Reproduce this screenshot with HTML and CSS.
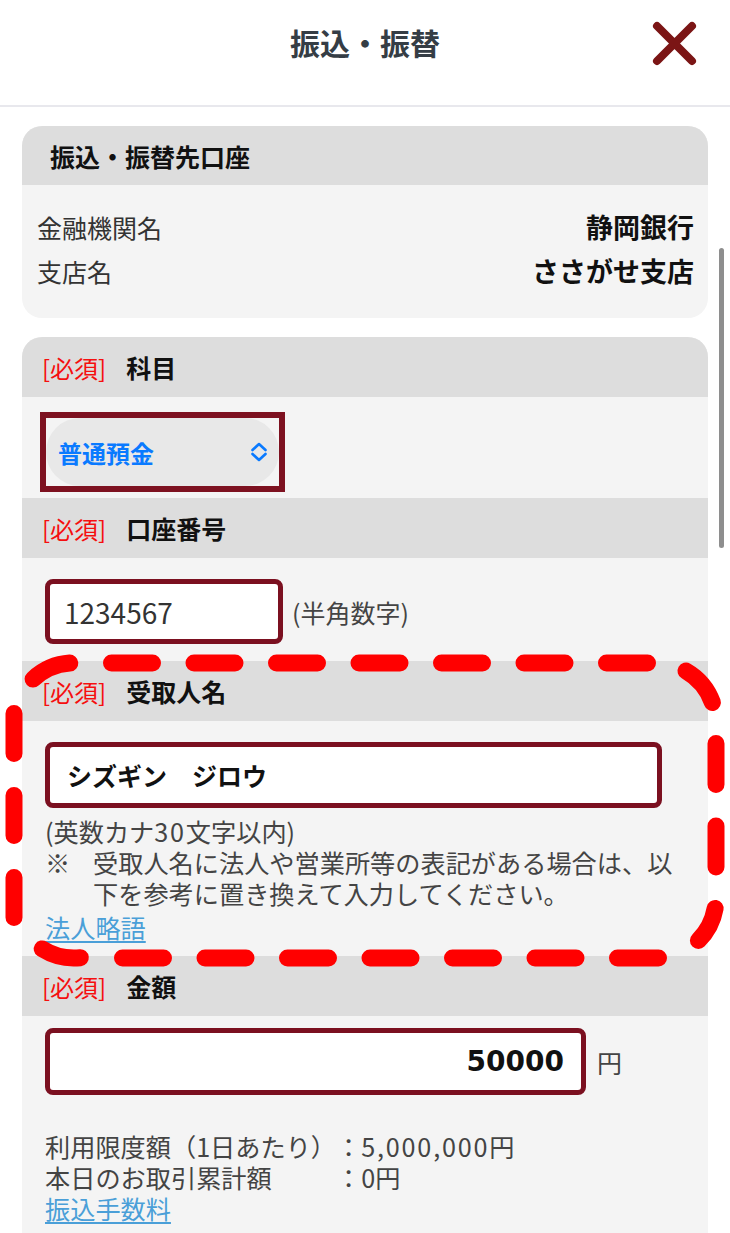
FILE: index.html
```html
<!DOCTYPE html>
<html lang="ja">
<head>
<meta charset="utf-8">
<title>振込・振替</title>
<link rel="stylesheet" href="styles.css">
</head>
<body>
<header class="topbar">
  <h1 class="title">振込・振替</h1>
  <button class="close" aria-label="閉じる">
    <svg width="45" height="45" viewBox="0 0 45 45"><path d="M5 5 L40 40 M40 5 L5 40" stroke="#7b1515" stroke-width="8" stroke-linecap="round" fill="none"/></svg>
  </button>
</header>

<main class="content">
  <section class="card">
    <div class="card-head">振込・振替先口座</div>
    <div class="info">
      <div class="info-row"><span class="info-label">金融機関名</span><span class="info-value">静岡銀行</span></div>
      <div class="info-row"><span class="info-label">支店名</span><span class="info-value">ささがせ支店</span></div>
    </div>
  </section>

  <section class="card form-card">
    <div class="field-head"><span class="req">[必須]</span><span class="field-title">科目</span></div>
    <div class="field-body select-body">
      <div class="select-frame">
        <div class="select-pill">
          <span class="select-text">普通預金</span>
          <svg class="chevron" width="18" height="22" viewBox="0 0 18 22"><path d="M2.5 9 L9 3 L15.5 9 M2.5 13 L9 19 L15.5 13" stroke="#0a7aff" stroke-width="2.6" stroke-linecap="round" stroke-linejoin="round" fill="none"/></svg>
        </div>
      </div>
    </div>

    <div class="field-head"><span class="req">[必須]</span><span class="field-title">口座番号</span></div>
    <div class="field-body inline-body account-body">
      <div class="input input-account">1234567</div>
      <span class="hint">(半角数字)</span>
    </div>

    <div class="field-head"><span class="req">[必須]</span><span class="field-title">受取人名</span></div>
    <div class="field-body name-body">
      <div class="input input-name">シズギン　ジロウ</div>
      <div class="notes name-notes">
        <div>(英数カナ<span class="num">30</span>文字以内)</div>
        <div class="note-row"><span class="note-mark">※</span><span class="note-text">受取人名に法人や営業所等の表記がある場合は、以下を参考に置き換えて入力してください。</span></div>
        <a class="link link-shift" href="#">法人略語</a>
      </div>
    </div>

    <div class="field-head"><span class="req">[必須]</span><span class="field-title">金額</span></div>
    <div class="field-body amount-body">
      <div class="inline-body">
        <div class="input input-amount">50000</div>
        <span class="hint">円</span>
      </div>
      <div class="notes amount-notes">
        <div class="limit-grid">
          <span>利用限度額（1日あたり）</span><span>：<span class="num">5,000,000</span>円</span>
          <span>本日のお取引累計額</span><span>：0円</span>
        </div>
        <a class="link" href="#">振込手数料</a>
      </div>
    </div>
  </section>
</main>

<svg class="annotation" width="730" height="1233" viewBox="0 0 730 1233">
  <g fill="none" stroke="#ff0000" stroke-width="17" stroke-linecap="round">
    <path d="M111.5 663 H660" stroke-dasharray="41 41.5"/>
    <path d="M33.1 679.1 A60 60 0 0 1 69.8 663.1"/>
    <path d="M686 671 A60 60 0 0 1 712.4 702.5"/>
    <path d="M716 743.5 V872" stroke-dasharray="41 41.5"/>
    <path d="M715.1 908.4 A60 60 0 0 1 698.4 940.4"/>
    <path d="M122.5 958 H660" stroke-dasharray="41 41.5"/>
    <path d="M80.3 957.7 A60 60 0 0 1 42.2 948.9"/>
    <path d="M14 713.5 V919" stroke-dasharray="40 42"/>
  </g>
</svg>
<div class="scroll-thumb"></div>
</body>
</html>
```

FILE: styles.css
```css
html, body {
  margin: 0;
  padding: 0;
}

body {
  position: relative;
  width: 730px;
  height: 1233px;
  overflow: hidden;
  background: #ffffff;
  font-family: "Noto Sans CJK JP", "Noto Sans", sans-serif;
  color: #333333;
}

.topbar {
  display: grid;
  grid-template-columns: 1fr auto 1fr;
  align-items: start;
  height: 105px;
  border-bottom: 2px solid #e8e8ed;
}

.title {
  grid-column: 2;
  margin: 0;
  font-size: 30px;
  font-weight: 700;
  line-height: 84px;
  color: #353d45;
}

.close {
  grid-column: 3;
  justify-self: end;
  margin: 21px 33px 0 0;
  padding: 0;
  width: 45px;
  height: 45px;
  border: 0;
  background: none;
  display: block;
}

.close svg {
  display: block;
}

.content {
  display: flex;
  flex-direction: column;
  gap: 19px;
  padding: 19px 22px 0;
}

.card {
  background: #f4f4f4;
  border-radius: 20px;
  overflow: hidden;
}

.card-head {
  height: 59px;
  display: flex;
  align-items: center;
  padding-left: 28px;
  background: #dddddd;
  font-size: 25px;
  font-weight: 700;
  color: #111111;
}

.info {
  padding: 20px 14px 25px 15px;
}

.info-row {
  display: flex;
  justify-content: space-between;
  align-items: baseline;
  line-height: 44px;
}

.info-label {
  font-size: 25px;
  color: #333333;
}

.info-value {
  font-size: 27px;
  font-weight: 700;
  color: #111111;
}

.form-card {
  padding-bottom: 60px;
}

.field-head {
  height: 60px;
  display: flex;
  align-items: center;
  gap: 20px;
  padding-left: 20px;
  background: #dddddd;
}

.req {
  font-size: 24px;
  color: #f50f0f;
}

.field-title {
  font-size: 25px;
  font-weight: 700;
  color: #111111;
}

.select-body {
  padding: 15px 0 6px 18px;
}

.select-frame {
  box-sizing: border-box;
  width: 245px;
  height: 80px;
  border: 6px solid #7d1120;
}

.select-pill {
  height: 100%;
  display: flex;
  align-items: center;
  justify-content: space-between;
  padding: 0 11px 0 12px;
  border-radius: 34px;
  background: #e8e8e8;
}

.select-text {
  font-size: 24px;
  font-weight: 700;
  color: #0a7aff;
}

.chevron {
  display: block;
}

.inline-body {
  display: flex;
  align-items: center;
}

.account-body {
  padding: 21px 23px 17px;
}

.input {
  box-sizing: border-box;
  display: flex;
  align-items: center;
  border: 5px solid #7b1020;
  border-radius: 8px;
  background: #ffffff;
}

.input-account {
  width: 238px;
  height: 65px;
  padding-left: 14px;
  font-size: 28px;
  color: #333333;
}

.hint {
  margin-left: 9px;
  font-size: 25px;
  color: #444444;
}

.name-body {
  padding: 21px 23px 13px;
}

.input-name {
  width: 617px;
  height: 66px;
  padding-left: 17px;
  font-size: 25px;
  font-weight: 700;
  color: #111111;
}

.notes {
  font-size: 25.2px;
  line-height: 31px;
  color: #444444;
}

.num {
  letter-spacing: 1.8px;
}

.name-notes {
  margin-top: 8px;
}

.note-row {
  display: flex;
}

.note-mark {
  flex: 0 0 48px;
}

.note-text {
  flex: 1;
}

.link {
  display: inline-block;
  color: #4a9fd8;
  text-decoration: underline;
  text-underline-offset: 3px;
}

.link-shift {
  margin-top: 3px;
}

.amount-body {
  padding: 12px 23px 0;
}

.input-amount {
  width: 541px;
  height: 67px;
  justify-content: flex-end;
  padding-right: 17px;
  font-family: "DejaVu Sans", sans-serif;
  font-size: 28px;
  font-weight: 700;
  color: #111111;
}

.amount-body .hint {
  margin-left: 11px;
}

.amount-notes {
  margin-top: 36px;
}

.limit-grid {
  display: grid;
  grid-template-columns: max-content 1fr;
}

.annotation {
  position: absolute;
  top: 0;
  left: 0;
  pointer-events: none;
}

.scroll-thumb {
  position: absolute;
  left: 719px;
  top: 248px;
  width: 5px;
  height: 300px;
  border-radius: 3px;
  background: #8e8e8e;
}
```
